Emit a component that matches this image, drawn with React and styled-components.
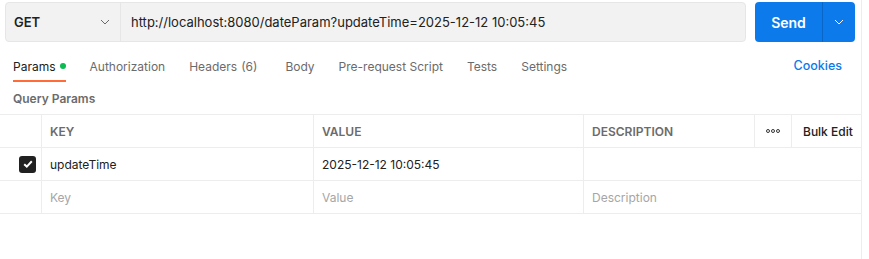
import React from 'react'
import styled, { createGlobalStyle } from 'styled-components'

const GlobalStyle = createGlobalStyle`
    body {
        margin: 0;
        background: #fff;
        font-family: Inter, "Noto Sans", sans-serif;
        color: #212121;
    }
`

const Page = styled.div`
    width: 862px;
    height: 259px;
    border-right: 1px solid #ededed;
    box-sizing: border-box;
`

const RequestBar = styled.div`
    display: flex;
    gap: 9px;
    padding: 2px 0 0 5px;
    height: 40px;
`

const UrlBox = styled.div`
    display: flex;
    width: 741px;
    height: 40px;
    box-sizing: border-box;
    background: #f2f2f2;
    border: 1px solid #e6e6e6;
    border-radius: 4px;
`

const Method = styled.div`
    display: flex;
    align-items: center;
    justify-content: space-between;
    width: 115px;
    box-sizing: border-box;
    padding: 0 10px 0 8px;
    border-right: 1px solid #e6e6e6;
    font-size: 13px;
    font-weight: 600;
    color: #212121;
`

const UrlText = styled.div`
    display: flex;
    align-items: center;
    padding-left: 10px;
    font-size: 13px;
    color: #212121;
`

const SendButton = styled.div`
    display: flex;
    width: 100px;
    height: 40px;
    background: #0c7aea;
    border-radius: 4px;
    color: #fff;
`

const SendLabel = styled.div`
    display: flex;
    align-items: center;
    justify-content: center;
    width: 67px;
    font-size: 14px;
    font-weight: 600;
    border-right: 1px solid #0a66c6;
`

const SendArrow = styled.div`
    flex: 1;
    display: flex;
    align-items: center;
    justify-content: center;
`

const Tabs = styled.div`
    display: flex;
    align-items: flex-start;
    padding: 0 19px 0 13px;
    margin-top: 16px;
    height: 24px;
`

const Tab = styled.div`
    display: flex;
    align-items: center;
    gap: 4px;
    margin-right: 24px;
    font-size: 12px;
    color: ${p => (p.$active ? '#212121' : '#6b6b6b')};
    height: 24px;
    box-sizing: border-box;
    border-bottom: 2px solid ${p => (p.$active ? '#ff6c37' : 'transparent')};
    padding-bottom: 6px;
`

const Count = styled.span`
    margin-right: 4px;
`

const Dot = styled.span`
    width: 6px;
    height: 6px;
    border-radius: 50%;
    background: #0cbb52;
`

const Cookies = styled.div`
    margin-left: auto;
    font-size: 12.5px;
    font-weight: 500;
    color: #0c7aea;
    height: 18px;
`

const SectionTitle = styled.div`
    padding: 9px 13px 0;
    height: 23px;
    font-size: 12px;
    font-weight: 600;
    color: #6b6b6b;
`

const Table = styled.div`
    display: grid;
    grid-template-columns: 41px 272px 270px 171px 37px 1fr;
    border-top: 1px solid #ededed;
`

const Cell = styled.div`
    display: flex;
    align-items: center;
    height: 32px;
    padding: 0 8px;
    border-bottom: 1px solid #ededed;
    border-left: ${p => (p.$noLeft ? 'none' : '1px solid #ededed')};
    font-size: 12px;
    color: ${p => (p.$placeholder ? '#a6a6a6' : p.$head ? '#6b6b6b' : '#212121')};
    font-weight: ${p => (p.$head ? 600 : 400)};
    ${p => p.$center && 'justify-content: center; padding: 0;'}
    ${p => p.$check && 'justify-content: flex-end; padding: 0 5px 0 0;'}
    white-space: nowrap;
    overflow: hidden;
`

const BulkEdit = styled(Cell)`
    color: #212121;
    font-weight: 500;
    padding-left: 11px;
`

const Check = styled.div`
    width: 17px;
    height: 17px;
    border-radius: 3px;
    background: #212121;
    display: flex;
    align-items: center;
    justify-content: center;
`

const Chevron = ({ color }) => (
    <svg width="10" height="6" viewBox="0 0 10 6" fill="none">
        <path d="M1 1l4 4 4-4" stroke={color} strokeWidth="1" />
    </svg>
)

const App = () => {
    return (
        <>
            <GlobalStyle />
            <Page>
                <RequestBar>
                    <UrlBox>
                        <Method>
                            GET
                            <Chevron color="#6b6b6b" />
                        </Method>
                        <UrlText>http://localhost:8080/dateParam?updateTime=2025-12-12 10:05:45</UrlText>
                    </UrlBox>
                    <SendButton>
                        <SendLabel>Send</SendLabel>
                        <SendArrow><Chevron color="#fff" /></SendArrow>
                    </SendButton>
                </RequestBar>

                <Tabs>
                    <Tab $active>Params<Dot /></Tab>
                    <Tab>Authorization</Tab>
                    <Tab>Headers <Count>(6)</Count></Tab>
                    <Tab>Body</Tab>
                    <Tab>Pre-request Script</Tab>
                    <Tab>Tests</Tab>
                    <Tab>Settings</Tab>
                    <Cookies>Cookies</Cookies>
                </Tabs>

                <SectionTitle>Query Params</SectionTitle>

                <Table>
                    <Cell $noLeft $head />
                    <Cell $head>KEY</Cell>
                    <Cell $head>VALUE</Cell>
                    <Cell $head>DESCRIPTION</Cell>
                    <Cell $head $center>
                        <svg width="14" height="4" viewBox="0 0 14 4">
                            <circle cx="2" cy="2" r="1.5" fill="none" stroke="#212121" strokeWidth="0.9" />
                            <circle cx="7" cy="2" r="1.5" fill="none" stroke="#212121" strokeWidth="0.9" />
                            <circle cx="12" cy="2" r="1.5" fill="none" stroke="#212121" strokeWidth="0.9" />
                        </svg>
                    </Cell>
                    <BulkEdit>Bulk Edit</BulkEdit>

                    <Cell $noLeft $check>
                        <Check>
                            <svg width="10" height="8" viewBox="0 0 10 8">
                                <path d="M1.2 4.2l2.6 2.4L8.8 1.3" stroke="#fff" strokeWidth="2" fill="none" />
                            </svg>
                        </Check>
                    </Cell>
                    <Cell>updateTime</Cell>
                    <Cell>2025-12-12 10:05:45</Cell>
                    <Cell />
                    <Cell $noLeft />
                    <Cell $noLeft />

                    <Cell $noLeft />
                    <Cell $placeholder>Key</Cell>
                    <Cell $placeholder>Value</Cell>
                    <Cell $placeholder>Description</Cell>
                    <Cell $noLeft />
                    <Cell $noLeft />
                </Table>
            </Page>
        </>
    )
}

export default App
